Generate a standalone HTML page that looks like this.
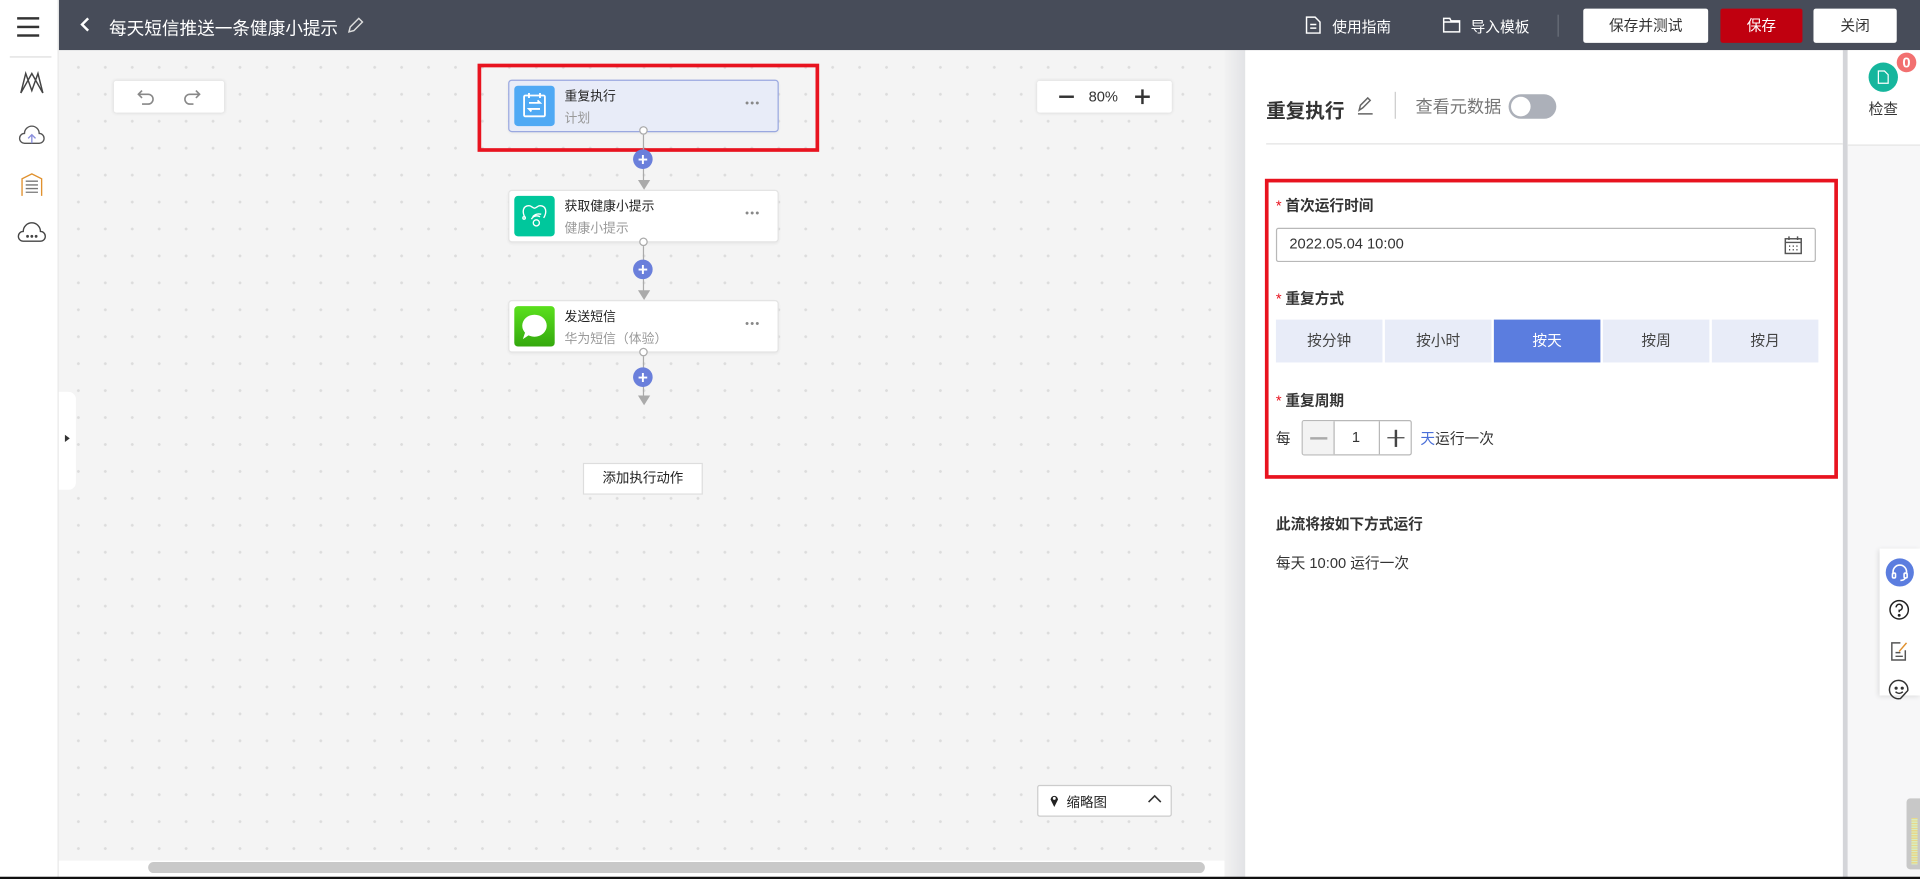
<!DOCTYPE html>
<html><head><meta charset="utf-8">
<style>
*{box-sizing:border-box;margin:0;padding:0}
html,body{width:1920px;height:879px;overflow:hidden;background:#fff}
body{font-family:"Liberation Sans","Noto Sans CJK SC",sans-serif;color:#333}
#s{position:absolute;left:0;top:0;width:1568px;height:718px;transform:scale(1.22449);transform-origin:0 0;overflow:hidden}
.a{position:absolute}
.canvas{left:48px;top:41px;width:952px;height:662px;background-color:#f4f4f4;background-image:radial-gradient(circle,#dcdcdc 1px,transparent 1.3px);background-size:22px 22px;background-position:5px 3px}
.node{position:absolute;left:415px;width:221px;height:43px;background:#fff;border:1px solid #e4e4e4;border-radius:3px;box-shadow:0 1px 2px rgba(0,0,0,.05)}
.node .ic{position:absolute;left:4px;top:4px;width:33px;height:33px;border-radius:3px}
.node .t{position:absolute;left:45px;top:5px;font-size:10.5px;color:#222}
.node .st{position:absolute;left:45px;top:23px;font-size:10.5px;color:#999}
.node .d{position:absolute;right:14px;top:13px;font-size:9px;color:#888;letter-spacing:1px}
.cir{position:absolute;width:7px;height:7px;border:1px solid #aaa;border-radius:50%;background:#fff}
.vl{position:absolute;width:1px;background:#aaa}
.plus{position:absolute;width:16px;height:16px;border-radius:50%;background:#6a7fdb;color:#fff;font-size:14px;line-height:16px;text-align:center;font-weight:bold}
.arr{position:absolute;width:0;height:0;border-left:5px solid transparent;border-right:5px solid transparent;border-top:8px solid #aaa}
.box{position:absolute;background:#fff;border-radius:2px;box-shadow:0 0 3px rgba(0,0,0,.12)}
.btn{position:absolute;top:7px;height:28px;border-radius:2px;font-size:12px;text-align:center;line-height:28px}
.lab{position:absolute;left:1042px;font-size:12px;color:#333;font-weight:bold}
.lab b{color:#e8131f;font-weight:normal;margin-right:3px}
.seg{position:absolute;top:261px;width:87px;height:35px;background:#e8ecf8;font-size:12px;line-height:35px;text-align:center;color:#444}
</style></head><body>
<div id="s">
<div class="a" style="left:48px;top:0;width:1520px;height:41px;background:#474c59"></div>
<div class="a" style="left:0;top:0;width:48px;height:718px;background:#fff;border-right:1px solid #e6e6e6"></div>
<div class="a" style="left:14px;top:14px;width:18px;height:2px;background:#333;box-shadow:0 7px 0 #333,0 14px 0 #333"></div>
<div class="a" style="left:8px;top:46px;width:34px;height:1px;background:#ddd"></div>
<svg class="a" style="left:15px;top:58px" width="22" height="20" viewBox="0 0 22 20" fill="none" stroke="#444" stroke-width="1.2"><path d="M2 18L6 2L11 16L16 2L20 18M2 18L11 2L20 18"/></svg>
<svg class="a" style="left:15px;top:100px" width="22" height="20" viewBox="0 0 22 20" fill="none" stroke="#555" stroke-width="1.1"><path d="M5 17H17A4 4 0 0 0 17 9A6 6 0 0 0 5 9A4 4 0 0 0 5 17Z"/><path d="M11 17V10M8 13L11 10L14 13" stroke="#8a8fdc"/></svg>
<svg class="a" style="left:16px;top:140px" width="20" height="22" viewBox="0 0 20 22" fill="none" stroke="#777" stroke-width="1.1"><path d="M2 20V6L10 2L18 6V20" stroke="#e0912e"/><path d="M5 8H15M5 11H15M5 14H15M5 17H15"/></svg>
<svg class="a" style="left:14px;top:180px" width="24" height="20" viewBox="0 0 24 20" fill="none" stroke="#444" stroke-width="1.1"><path d="M5 17H19A4 4 0 0 0 19 9A7 7 0 0 0 5 9A4 4 0 0 0 5 17Z"/><circle cx="8.5" cy="13" r=".6" fill="#444"/><circle cx="12" cy="13" r=".6" fill="#444"/><circle cx="15.5" cy="13" r=".6" fill="#444"/></svg>

<svg class="a" style="left:65px;top:13px" width="10" height="14" viewBox="0 0 10 14" fill="none" stroke="#fff" stroke-width="2"><path d="M7 2L2 7L7 12"/></svg>
<div class="a" style="left:89px;top:12px;font-size:14.4px;color:#fff;white-space:nowrap">每天短信推送一条健康小提示</div>
<svg class="a" style="left:282px;top:13px" width="16" height="16" viewBox="0 0 16 16" fill="none" stroke="#ddd" stroke-width="1.2"><path d="M3 13L4 9L11 2L14 5L7 12Z"/></svg>
<svg class="a" style="left:1066px;top:13px" width="13" height="15" viewBox="0 0 13 15" fill="none" stroke="#fff" stroke-width="1.2"><path d="M1 1H8L12 5V14H1Z M4 7H9M4 10H9"/></svg>
<div class="a" style="left:1088px;top:13px;font-size:12px;color:#fff">使用指南</div>
<svg class="a" style="left:1178px;top:14px" width="15" height="13" viewBox="0 0 15 13" fill="none" stroke="#fff" stroke-width="1.2"><path d="M1 1H6L7 3H14V12H1Z M1 4H14"/></svg>
<div class="a" style="left:1201px;top:13px;font-size:12px;color:#fff">导入模板</div>
<div class="a" style="left:1272px;top:12px;width:1px;height:18px;background:#6a6f7a"></div>
<div class="btn" style="left:1293px;width:102px;background:#fff;color:#333">保存并测试</div>
<div class="btn" style="left:1405px;width:67px;background:#c0000f;color:#fff">保存</div>
<div class="btn" style="left:1481px;width:68px;background:#fff;color:#333">关闭</div>

<div class="a canvas"></div>
<div class="a" style="left:48px;top:320px;width:14px;height:80px;background:#fff;border-radius:0 6px 6px 0"></div>
<div class="a" style="left:53px;top:355px;width:0;height:0;border-top:3px solid transparent;border-bottom:3px solid transparent;border-left:4px solid #333"></div>
<div class="box" style="left:93px;top:66px;width:90px;height:26px"></div>
<svg class="a" style="left:110px;top:71px" width="60" height="16" viewBox="0 0 60 16" fill="none" stroke="#888" stroke-width="1.3"><path d="M6 3L3 6L6 9M3 6H11A4 4 0 0 1 11 14H6"/><path d="M50 3L53 6L50 9M53 6H45A4 4 0 0 0 45 14H48"/></svg>
<div class="box" style="left:847px;top:66px;width:110px;height:26px"></div>
<div class="a" style="left:865px;top:78px;width:12px;height:1.5px;background:#333"></div>
<div class="a" style="left:889px;top:72px;font-size:12px;color:#333">80%</div>
<div class="a" style="left:927px;top:78px;width:12px;height:1.5px;background:#333"></div>
<div class="a" style="left:932.3px;top:73px;width:1.5px;height:12px;background:#333"></div>

<div class="a" style="left:390px;top:52px;width:279px;height:72px;border:3px solid #e8131f"></div>
<div class="node" style="top:65px;background:#e8ecf8;border-color:#9aa8e0">
 <div class="ic" style="background:#4fa9f4"><svg width="33" height="33" viewBox="0 0 33 33" fill="none" stroke="#fff" stroke-width="1.5"><rect x="8" y="8" width="17" height="17" rx="1"/><path d="M12 6V10M21 6V10M12 14H21L19 12M21 19H12L14 21"/></svg></div>
 <div class="t">重复执行</div><div class="st">计划</div><div class="d">•••</div>
</div>
<div class="vl" style="left:525px;top:110px;height:38px"></div>
<div class="cir" style="left:521.5px;top:103px"></div>
<div class="plus" style="left:517px;top:122px">+</div>
<div class="arr" style="left:520.5px;top:147px"></div>

<div class="node" style="top:155px">
 <div class="ic" style="background:#00c79c"><svg width="33" height="33" viewBox="0 0 33 33" fill="none" stroke="#fff" stroke-width="1.1"><path d="M9 18C6 13 7 8 12 8C14 8 15 10 16.5 10C18 10 19 8 21 8C26 8 27 13 24 18"/><circle cx="18" cy="22" r="2.5"/><path d="M14 19A5 5 0 0 1 21 17M15 17A7 7 0 0 1 22 15"/><circle cx="8" cy="18" r="1"/></svg></div>
 <div class="t">获取健康小提示</div><div class="st">健康小提示</div><div class="d">•••</div>
</div>
<div class="vl" style="left:525px;top:201px;height:38px"></div>
<div class="cir" style="left:521.5px;top:194px"></div>
<div class="plus" style="left:517px;top:212px">+</div>
<div class="arr" style="left:520.5px;top:237px"></div>

<div class="node" style="top:245px">
 <div class="ic" style="background:linear-gradient(#5ae01d,#34a80e)"><svg width="33" height="33" viewBox="0 0 33 33"><ellipse cx="16.5" cy="16" rx="10" ry="9" fill="#fff"/><path d="M9 21L7 27L13 23Z" fill="#fff"/></svg></div>
 <div class="t">发送短信</div><div class="st">华为短信（体验）</div><div class="d">•••</div>
</div>
<div class="vl" style="left:525px;top:291px;height:33px"></div>
<div class="cir" style="left:521.5px;top:284px"></div>
<div class="plus" style="left:517px;top:300px">+</div>
<div class="arr" style="left:520.5px;top:323px"></div>

<div class="a" style="left:476px;top:378px;width:98px;height:26px;background:#fff;border:1px solid #ddd;font-size:11px;text-align:center;line-height:24px;color:#222">添加执行动作</div>

<div class="a" style="left:847px;top:641px;width:110px;height:26px;background:#fff;border:1px solid #ccc;border-radius:2px"></div>
<svg class="a" style="left:857px;top:648px" width="8" height="11" viewBox="0 0 8 11"><path d="M4 11L1 5A3 3 0 1 1 7 5Z" fill="#222"/><circle cx="4" cy="4" r="1.2" fill="#fff"/></svg>
<div class="a" style="left:871px;top:647px;font-size:11px;color:#222">缩略图</div>
<svg class="a" style="left:937px;top:648px" width="12" height="9" viewBox="0 0 12 9" fill="none" stroke="#333" stroke-width="1.3"><path d="M1 7L6 2L11 7"/></svg>

<div class="a" style="left:48px;top:703px;width:952px;height:13px;background:#fff"></div>
<div class="a" style="left:121px;top:704px;width:863px;height:9px;border-radius:5px;background:#c9c9c9"></div>

<div class="a" style="left:1000px;top:41px;width:17px;height:677px;background:linear-gradient(90deg,#f2f2f2,#e2e3e6)"></div>
<div class="a" style="left:1017px;top:41px;width:488px;height:677px;background:#fff"></div>
<div class="a" style="left:1505px;top:41px;width:4px;height:677px;background:#d4d5d9"></div>
<div class="a" style="left:1509px;top:41px;width:59px;height:677px;background:#f7f7f8"></div>
<div class="a" style="left:1509px;top:41px;width:59px;height:78px;background:#fff;border-bottom:1px solid #e3e3e3"></div>
<div class="a" style="left:1526px;top:51px;width:24px;height:24px;border-radius:50%;background:#16b69d"></div>
<svg class="a" style="left:1533px;top:57px" width="10" height="12" viewBox="0 0 10 12" fill="none" stroke="#fff" stroke-width="1"><path d="M1 1H6L9 4V11H1Z"/></svg>
<div class="a" style="left:1549px;top:43px;width:16px;height:16px;border-radius:50%;background:#f27070;color:#fff;font-size:12px;text-align:center;line-height:16px;font-weight:bold">0</div>
<div class="a" style="left:1526px;top:80px;font-size:12px;color:#333">检查</div>

<div class="a" style="left:1034px;top:77px;font-size:16px;font-weight:bold;color:#333">重复执行</div>
<svg class="a" style="left:1106px;top:77px" width="18" height="18" viewBox="0 0 18 18" fill="none" stroke="#666" stroke-width="1.2"><path d="M4 13L5 9L11 3L13 5L7 11Z M3 16H15"/></svg>
<div class="a" style="left:1139px;top:75px;width:1px;height:22px;background:#ccc"></div>
<div class="a" style="left:1156px;top:77px;font-size:14px;color:#777">查看元数据</div>
<div class="a" style="left:1232px;top:77px;width:39px;height:20px;border-radius:10px;background:#acb0b9"></div>
<div class="a" style="left:1234px;top:79px;width:16px;height:16px;border-radius:50%;background:#fff"></div>
<div class="a" style="left:1034px;top:117px;width:471px;height:1px;background:#e3e3e3"></div>

<div class="a" style="left:1033px;top:146px;width:468px;height:245px;border:3px solid #e8131f"></div>
<div class="lab" style="top:159px"><b>*</b>首次运行时间</div>
<div class="a" style="left:1042px;top:186px;width:441px;height:28px;border:1px solid #b8b8b8;border-radius:2px"></div>
<div class="a" style="left:1053px;top:192px;font-size:12px;color:#333">2022.05.04 10:00</div>
<svg class="a" style="left:1457px;top:192px" width="15" height="16" viewBox="0 0 15 16" fill="none" stroke="#555" stroke-width="1.2"><rect x="1" y="3" width="13" height="12"/><path d="M4 1V4M11 1V4M1 6H14"/><path d="M4 9H5M7 9H8M10 9H11M4 12H5M7 12H8M10 12H11"/></svg>
<div class="lab" style="top:235px"><b>*</b>重复方式</div>
<div class="seg" style="left:1042px">按分钟</div>
<div class="seg" style="left:1131px">按小时</div>
<div class="seg" style="left:1220px;background:#5b7ddf;color:#fff">按天</div>
<div class="seg" style="left:1309px">按周</div>
<div class="seg" style="left:1398px">按月</div>
<div class="lab" style="top:318px"><b>*</b>重复周期</div>
<div class="a" style="left:1042px;top:349px;font-size:12px;color:#333">每</div>
<div class="a" style="left:1063px;top:343px;width:90px;height:29px;border:1px solid #b8b8b8;border-radius:2px;background:#fff"></div>
<div class="a" style="left:1064px;top:344px;width:26px;height:27px;background:#f3f3f3;border-right:1px solid #b8b8b8"></div>
<div class="a" style="left:1070px;top:357px;width:14px;height:1.5px;background:#aaa"></div>
<div class="a" style="left:1104px;top:350px;font-size:12px;color:#333">1</div>
<div class="a" style="left:1126px;top:344px;width:1px;height:27px;background:#b8b8b8"></div>
<div class="a" style="left:1133px;top:357px;width:14px;height:1.2px;background:#444"></div>
<div class="a" style="left:1139.4px;top:351px;width:1.2px;height:14px;background:#444"></div>
<div class="a" style="left:1160px;top:349px;font-size:12px;color:#333"><span style="color:#4a6fd8">天</span>运行一次</div>

<div class="a" style="left:1042px;top:419px;font-size:12px;font-weight:bold;color:#333">此流将按如下方式运行</div>
<div class="a" style="left:1042px;top:451px;font-size:12px;color:#333">每天 10:00 运行一次</div>

<div class="a" style="left:1535px;top:448px;width:33px;height:120px;background:#fff;box-shadow:-1px 1px 4px rgba(0,0,0,.12)"></div>
<div class="a" style="left:1540px;top:456px;width:23px;height:23px;border-radius:50%;background:#5b7ddf"></div>
<svg class="a" style="left:1544px;top:460px" width="15" height="15" viewBox="0 0 15 15" fill="none" stroke="#fff" stroke-width="1.3"><path d="M2 9V7A5.5 5.5 0 0 1 13 7V9"/><rect x="1.5" y="8" width="2.5" height="4" rx="1"/><rect x="11" y="8" width="2.5" height="4" rx="1"/><path d="M12 12Q11 14 8 14"/></svg>
<svg class="a" style="left:1542px;top:489px" width="18" height="18" viewBox="0 0 18 18" fill="none" stroke="#222" stroke-width="1.2"><circle cx="9" cy="9" r="7.5"/><path d="M6.5 7A2.5 2.5 0 1 1 9 9.5V11"/><circle cx="9" cy="13.5" r=".6" fill="#222"/></svg>
<svg class="a" style="left:1543px;top:523px" width="16" height="18" viewBox="0 0 16 18" fill="none" stroke="#555" stroke-width="1.2"><path d="M13 8V16H2V2H9"/><path d="M8 9L14 2" stroke="#e0912e"/><path d="M5 10H9M5 13H11"/></svg>
<svg class="a" style="left:1542px;top:554px" width="18" height="18" viewBox="0 0 18 18" fill="none" stroke="#333" stroke-width="1.2"><path d="M16 10A7.5 7.5 0 1 0 10 16.5L16 10Z"/><circle cx="6.5" cy="8" r=".7" fill="#333"/><circle cx="11.5" cy="8" r=".7" fill="#333"/><path d="M6 11Q9 13.5 12 11"/></svg>
<div class="a" style="left:1557px;top:652px;width:11px;height:58px;background:#c8c8c8;border-radius:3px 0 0 3px"></div>
<div class="a" style="left:1561px;top:668px;width:5px;height:38px;background:repeating-linear-gradient(#e8d88a 0 1px,#d8ecc0 1px 2px)"></div>

<div class="a" style="left:0;top:716px;width:1568px;height:2px;background:#111"></div>
</div>
</body></html>
